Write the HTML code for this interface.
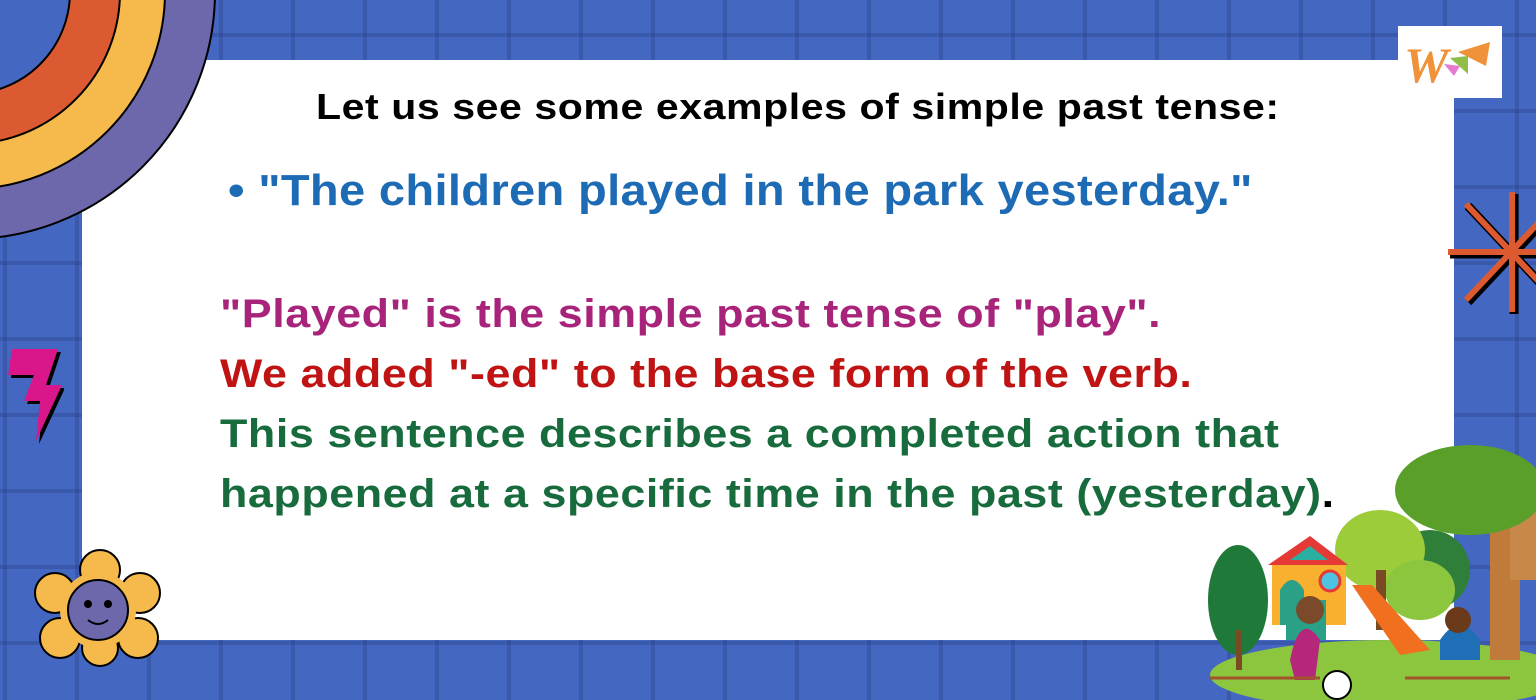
<!DOCTYPE html>
<html><head><meta charset="utf-8">
<style>
body{margin:0;width:1536px;height:700px;overflow:hidden;background:#4468c2;font-family:"Liberation Sans",sans-serif;font-weight:bold;position:relative}
.grid{position:absolute;inset:0;background-image:linear-gradient(90deg,rgba(40,60,130,.35) 4px,transparent 4px),linear-gradient(rgba(40,60,130,.35) 4px,transparent 4px);background-size:72px 76px;background-position:3px 33px}
.panel{position:absolute;left:82px;top:60px;width:1372px;height:580px;background:#fff}
.logo{position:absolute;left:1398px;top:26px;width:104px;height:72px;background:#fff}
.t{position:absolute;white-space:nowrap;transform-origin:0 50%}
.p{font-size:40px;letter-spacing:0.5px;transform:scaleX(1.12)}
</style></head><body>
<div class="grid"></div>
<div class="panel"></div>
<div class="logo"><svg width="104" height="72"><text x="6" y="56" font-family="Liberation Serif" font-style="italic" font-size="50" fill="#f0923a">W</text><polygon points="60,26 92,16 88,40" fill="#f0923a"/><polygon points="52,32 70,30 70,48" fill="#8fbe4a"/><polygon points="46,38 62,40 56,50" fill="#e57bd0"/></svg></div>
<svg style="position:absolute;left:0;top:0" width="230" height="250">
<circle cx="-32" cy="-8" r="247" fill="#6c68ab" stroke="#000" stroke-width="2"/>
<circle cx="-32" cy="-8" r="197" fill="#f6b94b" stroke="#000" stroke-width="2"/>
<circle cx="-32" cy="-8" r="152" fill="#db5a32" stroke="#000" stroke-width="2"/>
<circle cx="-32" cy="-8" r="102" fill="#4468c2" stroke="#000" stroke-width="2"/>
</svg>
<svg style="position:absolute;left:1448px;top:190px" width="88" height="130">
<g stroke="#000" stroke-width="9"><line x1="66" y1="4" x2="66" y2="124"/><line x1="2" y1="64" x2="88" y2="64"/><line x1="20" y1="16" x2="110" y2="112"/><line x1="20" y1="112" x2="110" y2="16"/></g>
<g stroke="#dd5a30" stroke-width="6"><line x1="64" y1="2" x2="64" y2="122"/><line x1="0" y1="62" x2="88" y2="62"/><line x1="18" y1="14" x2="108" y2="110"/><line x1="18" y1="110" x2="108" y2="14"/></g>
</svg>
<svg style="position:absolute;left:0;top:345px" width="64" height="100"><polygon points="12,4 58,4 46,40 62,40 36,96 40,56 24,56 34,30 8,30" fill="#000" transform="translate(3,3)"/><polygon points="12,4 58,4 46,40 62,40 36,96 40,56 24,56 34,30 8,30" fill="#d9168a"/></svg>
<svg style="position:absolute;left:30px;top:548px" width="140" height="120">
<g fill="#f6b94b" stroke="#000" stroke-width="2"><circle cx="70" cy="22" r="20"/><circle cx="110" cy="45" r="20"/><circle cx="108" cy="90" r="20"/><circle cx="70" cy="100" r="18"/><circle cx="30" cy="90" r="20"/><circle cx="25" cy="45" r="20"/><circle cx="68" cy="62" r="38" stroke="none"/></g>
<circle cx="68" cy="62" r="30" fill="#6c68ab" stroke="#000" stroke-width="2"/>
<circle cx="58" cy="56" r="4"/><circle cx="78" cy="56" r="4"/><path d="M58 72 Q68 80 78 72" stroke="#000" stroke-width="2" fill="none"/></svg>
<svg style="position:absolute;left:1200px;top:440px" width="336" height="260">
<ellipse cx="190" cy="235" rx="180" ry="35" fill="#8cc63f"/>
<rect x="290" y="80" width="30" height="140" fill="#c07a3a"/>
<rect x="310" y="60" width="26" height="80" fill="#c8884a"/>
<ellipse cx="270" cy="50" rx="75" ry="45" fill="#5a9f2a"/><ellipse cx="230" cy="130" rx="40" ry="40" fill="#2f7f3a"/>
<ellipse cx="180" cy="110" rx="45" ry="40" fill="#9ccc3a"/><ellipse cx="220" cy="150" rx="35" ry="30" fill="#8cc63f"/>
<rect x="176" y="130" width="10" height="60" fill="#7a4a22"/>
<ellipse cx="38" cy="160" rx="30" ry="55" fill="#1f7a3a"/><rect x="36" y="190" width="6" height="40" fill="#7a4a22"/>
<polygon points="68,125 110,96 148,125" fill="#e53935"/><polygon points="90,120 110,106 128,120" fill="#2ab0a0"/>
<rect x="72" y="125" width="74" height="60" fill="#f9b02e"/><path d="M80 185 V150 Q92 130 104 150 V185Z" fill="#2aa087"/>
<circle cx="130" cy="141" r="10" fill="#4ec3e0" stroke="#e53935" stroke-width="3"/>
<polygon points="152,145 172,145 230,210 200,215" fill="#f07020"/>
<rect x="86" y="160" width="40" height="40" fill="#2aa087"/>
<path d="M90 220 Q100 170 120 200 L115 240 H95Z" fill="#b5277a"/><circle cx="110" cy="170" r="14" fill="#7a4a2a"/>
<circle cx="137" cy="245" r="14" fill="#fff" stroke="#000" stroke-width="2"/>
<path d="M540 210 Q560 180 580 210 V230 H540Z" fill="#1e6fb5" transform="translate(-300,-10)"/><circle cx="258" cy="180" r="13" fill="#6a3a1a"/>
<g stroke="#a0562a" stroke-width="3"><line x1="10" y1="238" x2="120" y2="238"/><line x1="205" y1="238" x2="310" y2="238"/></g>
</svg>
<div class="t" style="left:316px;top:86px;font-size:36px;letter-spacing:0.5px;transform:scaleX(1.14);color:#000">Let us see some examples of simple past tense:</div>
<div class="t" style="left:228px;top:166px;font-size:44px;letter-spacing:0.3px;transform:scaleX(1.07);color:#1d6ab5">•&nbsp;"The children played in the park yesterday."</div>
<div class="t p" style="left:220px;top:292px;color:#a8237a">"Played" is the simple past tense of "play".</div>
<div class="t p" style="left:220px;top:352px;color:#c01414">We added "-ed" to the base form of the verb.</div>
<div class="t p" style="left:220px;top:412px;color:#176b3c">This sentence describes a completed action that</div>
<div class="t p" style="left:220px;top:472px;color:#176b3c">happened at a specific time in the past (yesterday)<span style="color:#000">.</span></div>
</body></html>
